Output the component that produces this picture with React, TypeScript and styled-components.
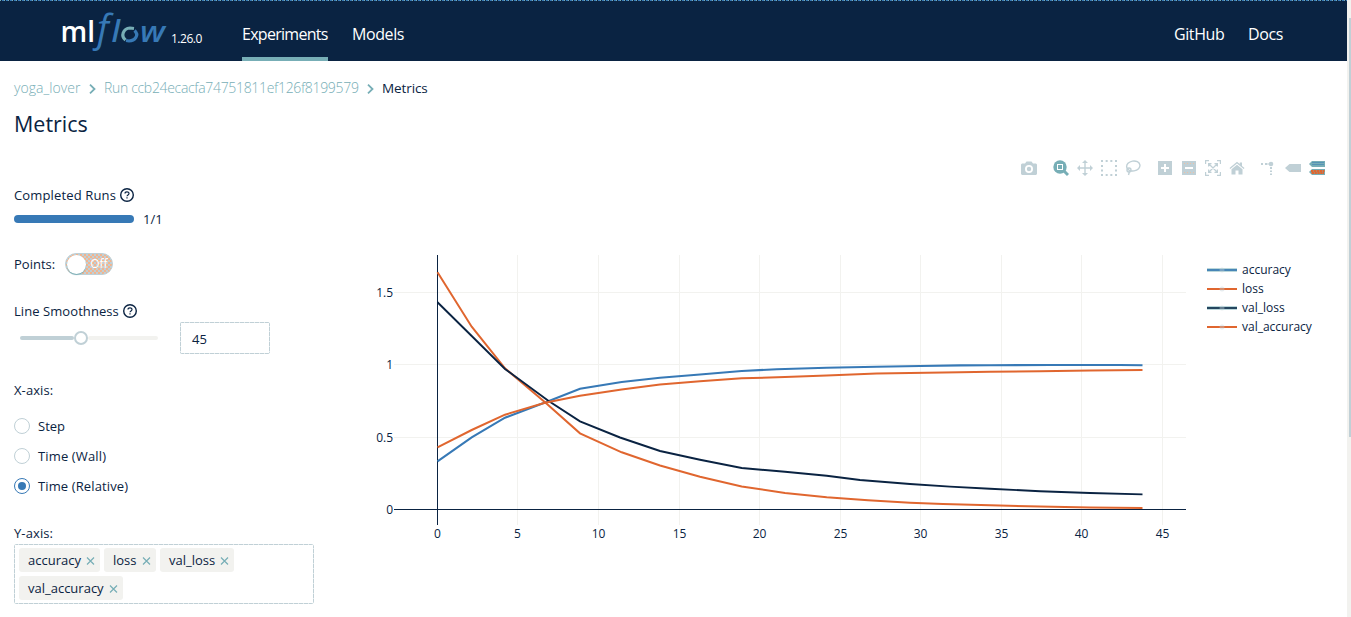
import React from 'react';
import styled, { createGlobalStyle, css } from 'styled-components';

const navy = '#0a2342';
const blue = '#3779b6';
const teal = '#77aeb6';
const pale = '#c0d0d6';
const mist = '#f2f2ef';
const orange = '#e0662f';

const Global = createGlobalStyle`
  * { box-sizing: border-box; }
  html, body { margin: 0; height: 617px; overflow: hidden; background: #fff; }
  body { font: 13px/20px 'Open Sans', 'Noto Sans', sans-serif; color: ${navy}; }
`;

const fineDashes = css`
  background:
    repeating-linear-gradient(90deg, ${pale} 0 4px, #e6ecee 4px 5px) top / 100% 1px no-repeat,
    repeating-linear-gradient(90deg, ${pale} 0 4px, #e6ecee 4px 5px) bottom / 100% 1px no-repeat,
    repeating-linear-gradient(${pale} 0 4px, #e6ecee 4px 5px) left / 1px 100% no-repeat,
    repeating-linear-gradient(${pale} 0 4px, #e6ecee 4px 5px) right / 1px 100% no-repeat;
`;

const Page = styled.div`
  display: flex;
  width: 1351px;
  height: 617px;
  overflow: hidden;
`;
const Main = styled.div`
  width: 1347px;
  display: flex;
  flex-direction: column;
`;
const Scrollbar = styled.div`
  width: 4px;
  padding: 18px 0 0 2px;
  background: ${mist};
`;
const Thumb = styled.div`
  height: 419px;
  background: ${pale};
`;
const Header = styled.header`
  display: flex;
  height: 61px;
  border-top: 1px solid transparent;
  background:
    repeating-linear-gradient(90deg, ${teal} 0 1px, ${navy} 1px 2px, ${blue} 2px 4px) border-box top / 100% 1px no-repeat,
    ${navy};
  color: #fff;
  padding: 0 64px 0 60px;
`;
const Version = styled.span`
  width: 71px;
  padding-top: 28px;
  font-size: 12px;
  letter-spacing: -0.5px;
`;
const NavLink = styled.a<{ $w: number; $ls?: number; $active?: boolean }>`
  width: ${p => p.$w}px;
  height: 60px;
  padding-top: 23px;
  margin-right: 24px;
  font-size: 16px;
  letter-spacing: ${p => p.$ls ?? -0.4}px;
  white-space: nowrap;
  border-bottom: ${p => (p.$active ? `4px solid ${teal}` : 'none')};
  &:last-child { margin-right: 0; }
`;
const Spacer = styled.div`flex: 1;`;

const Crumbs = styled.nav`
  display: flex;
  align-items: center;
  height: 20px;
  margin: 17px 0 0 14px;
  color: ${teal};
`;
const Crumb = styled.span<{ $w: number; $current?: boolean; $ls?: number }>`
  width: ${p => p.$w}px;
  white-space: nowrap;
  font-size: ${p => (p.$current ? 13.5 : 14)}px;
  letter-spacing: ${p => p.$ls ?? 0}px;
  font-weight: ${p => (p.$current ? 400 : 350)};
  color: ${p => (p.$current ? navy : teal)};
`;
const CrumbSep = styled.svg`
  position: relative;
  top: 1px;
  margin: 0 8px;
`;
const Title = styled.h1`
  margin: 10px 0 0 14px;
  font-size: 21.5px;
  line-height: 32px;
  font-weight: 500;
  letter-spacing: 0;
`;
const Body = styled.div`
  display: flex;
  flex: 1;
`;
const Controls = styled.aside`
  width: 360px;
  padding: 45px 0 0 14px;
`;
const Row = styled.div<{ $h?: number; $mt?: number; $gap?: number }>`
  display: flex;
  align-items: center;
  height: ${p => p.$h ?? 20}px;
  margin-top: ${p => p.$mt ?? 0}px;
  gap: ${p => p.$gap ?? 0}px;
`;
const Label = styled.span<{ $ls?: number }>`
  white-space: nowrap;
  font-size: 13px;
  letter-spacing: ${p => p.$ls ?? 0}px;
`;
const Progress = styled.div`
  width: 120px;
  height: 8px;
  border-radius: 4px;
  background: ${blue};
`;
const Switch = styled.div`
  display: flex;
  align-items: center;
  width: 48px;
  height: 22px;
  padding: 1px;
  border-radius: 11px;
  border: 1px solid ${pale};
  background:
    conic-gradient(#f2b48e 0 25%, transparent 0) 0 0 / 4px 4px,
    conic-gradient(#f2b48e 0 25%, transparent 0) 2px 2px / 4px 4px,
    ${pale};
  color: #fff;
  font-size: 12px;
  line-height: 20px;
  gap: 4px;
`;
const Knob = styled.i`
  width: 19px;
  height: 19px;
  border-radius: 50%;
  background: #fff;
  box-shadow: 0 1px 1px ${teal};
`;
const Slider = styled.div`
  display: flex;
  align-items: center;
  width: 138px;
  margin: 0 22px 0 6px;
`;
const Rail = styled.i<{ $w: number; $c: string }>`
  width: ${p => p.$w}px;
  height: 4px;
  background: ${p => p.$c};
  border-radius: 2px;
`;
const Handle = styled.i`
  width: 14px;
  height: 14px;
  border: 2px solid ${pale};
  border-radius: 50%;
  background: #fff;
`;
const NumberBox = styled.div`
  width: 90px;
  height: 32px;
  padding: 7px 12px;
  border-radius: 2px;
  ${fineDashes}
`;
const Radio = styled.i<{ $on?: boolean }>`
  display: flex;
  align-items: center;
  justify-content: center;
  width: 16px;
  height: 16px;
  border: 1px solid ${p => (p.$on ? blue : pale)};
  border-radius: 50%;
  &::after {
    content: '';
    width: 8px;
    height: 8px;
    border-radius: 50%;
    background: ${p => (p.$on ? blue : 'transparent')};
  }
`;
const TagBox = styled.div`
  display: flex;
  flex-wrap: wrap;
  align-content: flex-start;
  gap: 4px;
  width: 300px;
  height: 60px;
  margin-top: 1px;
  padding: 4px 5px;
  border-radius: 3px;
  ${fineDashes}
`;
const Tag = styled.span<{ $w: number }>`
  display: flex;
  align-items: center;
  justify-content: space-between;
  width: ${p => p.$w}px;
  height: 24px;
  padding: 0 5.5px 0 9px;
  background: ${mist};
  border-radius: 3px;
`;
const ChartArea = styled.section`
  display: flex;
  flex-direction: column;
  flex: 1;
`;
const ModeBar = styled.div`
  display: flex;
  justify-content: flex-end;
  height: 18px;
  margin-top: 19px;
  padding-right: 22px;
`;
const ModeGroup = styled.div`
  display: flex;
  gap: 8px;
  margin-left: 16px;
`;
const Figure = styled.div`
  display: flex;
  margin-top: 78px;
`;
const Legend = styled.ul`
  list-style: none;
  margin: 0;
  padding: 5px 0 0 7px;
`;
const LegendItem = styled.li`
  display: flex;
  align-items: center;
  gap: 5px;
  height: 19px;
  font-size: 12px;
`;

const Logo = () => (
  <svg width="111" height="60" viewBox="60 1 111 60">
    <text x="60.500" y="42" fontSize="29" fontWeight="650" fill="#fff" textLength="34.500" lengthAdjust="spacingAndGlyphs">ml</text>
    <g fill={blue} fontStyle="italic">
      <text x="97" y="42" fontSize="38" fontWeight="500">f</text>
      <text x="111.500" y="42" fontSize="31" fontWeight="600">l</text>
      <text x="140" y="42" fontSize="29" fontWeight="600" textLength="25" lengthAdjust="spacingAndGlyphs">w</text>
    </g>
    <path d="M125.500 40 C120.500 36 123 28.500 130 28 L134 28.500" fill="none" stroke={teal} strokeWidth="3.200" />
    <path d="M134.500 30.500 C139.500 35 135 41 129 41 L126 40.500" fill="none" stroke={blue} strokeWidth="3.200" />
  </svg>
);

const Help = () => (
  <svg width="14" height="14" viewBox="0 0 14 14" fill="none" stroke={navy}>
    <circle cx="7" cy="7" r="6.300" strokeWidth="1.400" />
    <path d="M5 5.600 C5 3.200 9 3.200 9 5.500 C9 6.900 7 6.900 7 8.300 M7 9.300 V10.600" strokeWidth="1.200" />
  </svg>
);

const Close = () => (
  <svg width="9" height="9" viewBox="0 0 9 9" stroke={teal} strokeWidth="1.200">
    <path d="M1 1.500 L8 8.500 M8 1.500 L1 8.500" />
  </svg>
);

const Sep = () => (
  <CrumbSep width="7" height="10" viewBox="0 0 7 10" fill="none" stroke={teal} strokeWidth="1.800">
    <path d="M1 .7 L5.500 5 L1 9.300" />
  </CrumbSep>
);

const Ico = ({ children }: { children: React.ReactNode }) => (
  <svg width="16" height="18" viewBox="0 0 16 18" fill={pale}>{children}</svg>
);

type Pt = [number, number];
const series: { name: string; color: string; edge?: string; width: number; pts: Pt[] }[] = [
  { name: 'accuracy', color: blue, edge: teal, width: 2.1, pts: [[437.5, 461.3], [471.7, 437.3], [505, 417.7], [548.3, 401.3], [580, 388.7], [621.7, 382], [660, 377.7], [700, 374.5], [741.7, 371], [776.7, 369.2], [826.7, 367.8], [876.7, 366.7], [920, 366], [960, 365.4], [990, 365.2], [1050, 365], [1120, 365], [1142.5, 365.3]] },
  { name: 'loss', color: orange, width: 2, pts: [[437.5, 272.3], [471.7, 326.7], [505, 368.3], [545, 402.3], [580, 433.3], [621.7, 452.3], [660, 465.5], [700, 476.7], [741.7, 486.5], [785, 493], [826.7, 497.3], [868, 500.3], [910, 502.7], [943, 504], [990, 505.3], [1040, 506.5], [1090, 507.4], [1142.5, 508]] },
  { name: 'val_loss', color: navy, edge: teal, width: 1.9, pts: [[437.5, 302.2], [471.7, 336], [505, 369], [548.3, 400.7], [580, 421.3], [620, 437.5], [660, 451], [700, 459.7], [741.7, 468], [785, 471.8], [826.7, 475.7], [860, 480], [910, 484], [950, 486.6], [990, 488.8], [1040, 491.2], [1090, 493], [1142.5, 494.4]] },
  { name: 'val_accuracy', color: orange, width: 2, pts: [[437.5, 447.3], [471.7, 430], [505, 414.7], [545, 402.8], [580, 395.7], [621.7, 389.5], [660, 384.5], [700, 381.3], [741.7, 378.3], [785, 377], [826.7, 375.4], [876.7, 373.6], [926.7, 372.7], [960, 372.2], [990, 371.8], [1040, 371.2], [1090, 370.6], [1142.5, 370]] },
];
const xTicks = [437.5, 517.5, 598.5, 679.5, 759.5, 840.5, 920.5, 1001.5, 1081.5, 1162.5];
const yTicks: [number, string][] = [[292.5, '1.5'], [364.5, '1'], [437.5, '0.5'], [509.5, '0']];

const Chart = () => (
  <svg width="840" height="290" viewBox="360 255 840 290" fontSize="12" fill={navy}>
    <g stroke={mist}>
      {xTicks.slice(1).map(x => <path key={x} d={`M${x} 255 V525`} />)}
      {yTicks.slice(0, 3).map(([y]) => <path key={y} d={`M394 ${y} H1186`} />)}
    </g>
    <path d="M437.500 255 V525 M394 509.500 H1186" stroke={navy} />
    {series.map(s => (
      <polyline key={s.name} points={s.pts.join(' ')} fill="none" stroke={s.color} strokeWidth={s.width} />
    ))}
    {xTicks.map((x, i) => <text key={x} x={x} y="538" textAnchor="middle">{i * 5}</text>)}
    {yTicks.map(([y, t]) => <text key={t} x="393" y={y + 4.5} textAnchor="end">{t}</text>)}
  </svg>
);

const PlotTools = () => (
  <ModeBar>
    <ModeGroup>
      <Ico><path fillRule="evenodd" d="M0 5.500 L1 4.500 H4 L5.500 2.500 H10.500 L12 4.500 H15 L16 5.500 V15 L15 16 H1 L0 15 Z M8 6 A4 4 0 1 0 8 14 A4 4 0 1 0 8 6 Z M8 7.800 A2.200 2.200 0 1 1 8 12.200 A2.200 2.200 0 1 1 8 7.800 Z" /></Ico>
    </ModeGroup>
    <ModeGroup>
      <Ico>
        <circle cx="7" cy="8" r="6.700" fill={teal} />
        <path d="M11 12 L15 16" stroke={teal} strokeWidth="3" />
        <rect x="4.500" y="5.500" width="5" height="5" fill={teal} stroke="#fff" />
      </Ico>
      <Ico><path d="M7.300 4 H5 L8 1 L11 4 H8.700 V8.300 H13 V6 L16 9 L13 12 V9.700 H8.700 V14 H11 L8 17 L5 14 H7.300 V9.700 H3 V12 L0 9 L3 6 V8.300 H7.300 Z" /></Ico>
      <Ico><path d="M0 2 H16 M0 16 H16" stroke={pale} strokeWidth="2" strokeDasharray="2 2.667" /><path d="M1 6 V14 M15 6 V14" stroke={pale} strokeWidth="2" strokeDasharray="2 2.500" /></Ico>
      <Ico><g fill="none" stroke={pale} strokeWidth="1.400"><ellipse cx="8.300" cy="7" rx="6.700" ry="5" transform="rotate(-10 8.300 7)" /><circle cx="4" cy="11" r="2" /><path d="M4.500 12.500 L3.500 16" /></g></Ico>
    </ModeGroup>
    <ModeGroup>
      <Ico><path fillRule="evenodd" d="M1 2 H15 V16 H1 Z M7 5 V8 H4 V10 H7 V13 H9 V10 H12 V8 H9 V5 Z" /></Ico>
      <Ico><path fillRule="evenodd" d="M1 2 H15 V16 H1 Z M4 8 V10 H12 V8 Z" /><path d="M3 4.500 H13 M3 13.500 H13" stroke="#ecc1a6" strokeDasharray="1 2" /></Ico>
      <Ico><g fill="none" stroke={pale} strokeWidth="1.200"><path d="M.6 5 V1.600 H4 M12 1.600 H15.400 V5 M15.400 13 V16.400 H12 M4 16.400 H.6 V13" /><path d="M4 5 L12 13 M12 5 L4 13 M3.600 7.500 V4.600 H6.500 M9.500 4.600 H12.400 V7.500 M12.400 10.500 V13.400 H9.500 M6.500 13.400 H3.600 V10.500" /></g></Ico>
      <Ico><path d="M.5 9 L8 2.700 L10.800 5 V3.500 H13 V7 L15.500 9 L14.700 10 L8 4.600 L1.300 10 Z" /><path d="M2.500 10.200 L8 5.800 L13.500 10.200 V15.500 H9.500 V11.500 H6.500 V15.500 H2.500 Z" /></Ico>
    </ModeGroup>
    <ModeGroup>
      <Ico><path d="M0 4 H2 V6 H0 Z M4 4 H6 V6 H4 Z M9 8 H11 V10 H9 Z M9 11.500 H11 V13 H9 Z M9 14.500 H11 V16 H9 Z" /><circle cx="10" cy="5" r="2.300" /><path d="M6 4.500 H9 V5.500 H6 Z" /></Ico>
      <Ico><path d="M0 9 L4.500 5 H16 V13 H4.500 Z" /></Ico>
      <Ico><path d="M0 5 L3 2 H16 V8 H3 Z" fill={teal} /><path d="M3.500 3.500 H15 M3.500 5.500 H15" stroke={blue} strokeDasharray="1 1" /><path d="M0 13 L3 10 H16 V16 H3 Z" fill={teal} /><path d="M2 12 H15.500 M2.500 14 H15" stroke={orange} strokeWidth="2" strokeDasharray="2.500 .4" /></Ico>
    </ModeGroup>
  </ModeBar>
);

export default function App() {
  return (
    <Page>
      <Global />
      <Main>
        <Header>
          <Logo />
          <Version>1.26.0</Version>
          <NavLink $w={86} $ls={-0.72} $active>Experiments</NavLink>
          <NavLink $w={52}>Models</NavLink>
          <Spacer />
          <NavLink $w={50}>GitHub</NavLink>
          <NavLink $w={35}>Docs</NavLink>
        </Header>
        <Crumbs>
          <Crumb $w={67} $ls={0.05}>yoga_lover</Crumb>
          <Sep />
          <Crumb $w={255} $ls={-0.32}>Run ccb24ecacfa74751811ef126f8199579</Crumb>
          <Sep />
          <Crumb $w={50} $current $ls={-0.1}>Metrics</Crumb>
        </Crumbs>
        <Title>Metrics</Title>
        <Body>
          <Controls>
            <Row $gap={4}><Label $ls={0.14}>Completed Runs</Label><Help /></Row>
            <Row $mt={4} $gap={9}><Progress /><Label>1/1</Label></Row>
            <Row $mt={25} $gap={10}><Label>Points:</Label><Switch><Knob />Off</Switch></Row>
            <Row $mt={27} $gap={4}><Label $ls={0.07}>Line Smoothness</Label><Help /></Row>
            <Row $h={32} $mt={1}>
              <Slider><Rail $w={54} $c={pale} /><Handle /><Rail $w={70} $c={mist} /></Slider>
              <NumberBox>45</NumberBox>
            </Row>
            <Row $mt={26}><Label $ls={0.1}>X-axis:</Label></Row>
            <Row $mt={16} $gap={8}><Radio /><Label>Step</Label></Row>
            <Row $mt={10} $gap={8}><Radio /><Label $ls={0.14}>Time (Wall)</Label></Row>
            <Row $mt={10} $gap={8}><Radio $on /><Label $ls={0.12}>Time (Relative)</Label></Row>
            <Row $mt={27}><Label $ls={0.1}>Y-axis:</Label></Row>
            <TagBox>
              <Tag $w={81}>accuracy<Close /></Tag>
              <Tag $w={52}>loss<Close /></Tag>
              <Tag $w={74}>val_loss<Close /></Tag>
              <Tag $w={104}>val_accuracy<Close /></Tag>
            </TagBox>
          </Controls>
          <ChartArea>
            <PlotTools />
            <Figure>
              <Chart />
              <Legend>
                {series.map(s => (
                  <LegendItem key={s.name}>
                    <svg width="30" height="6" viewBox="0 0 30 6">
                      {s.edge && <path d="M0 3 H30" stroke={s.edge} strokeWidth="3" />}
                      <path d="M0 3 H30" stroke={s.color} strokeWidth={s.edge ? 1.5 : 2} />
                      <circle cx="15" cy="3" r="2.500" fill={pale} opacity=".4" />
                    </svg>
                    {s.name}
                  </LegendItem>
                ))}
              </Legend>
            </Figure>
          </ChartArea>
        </Body>
      </Main>
      <Scrollbar><Thumb /></Scrollbar>
    </Page>
  );
}
